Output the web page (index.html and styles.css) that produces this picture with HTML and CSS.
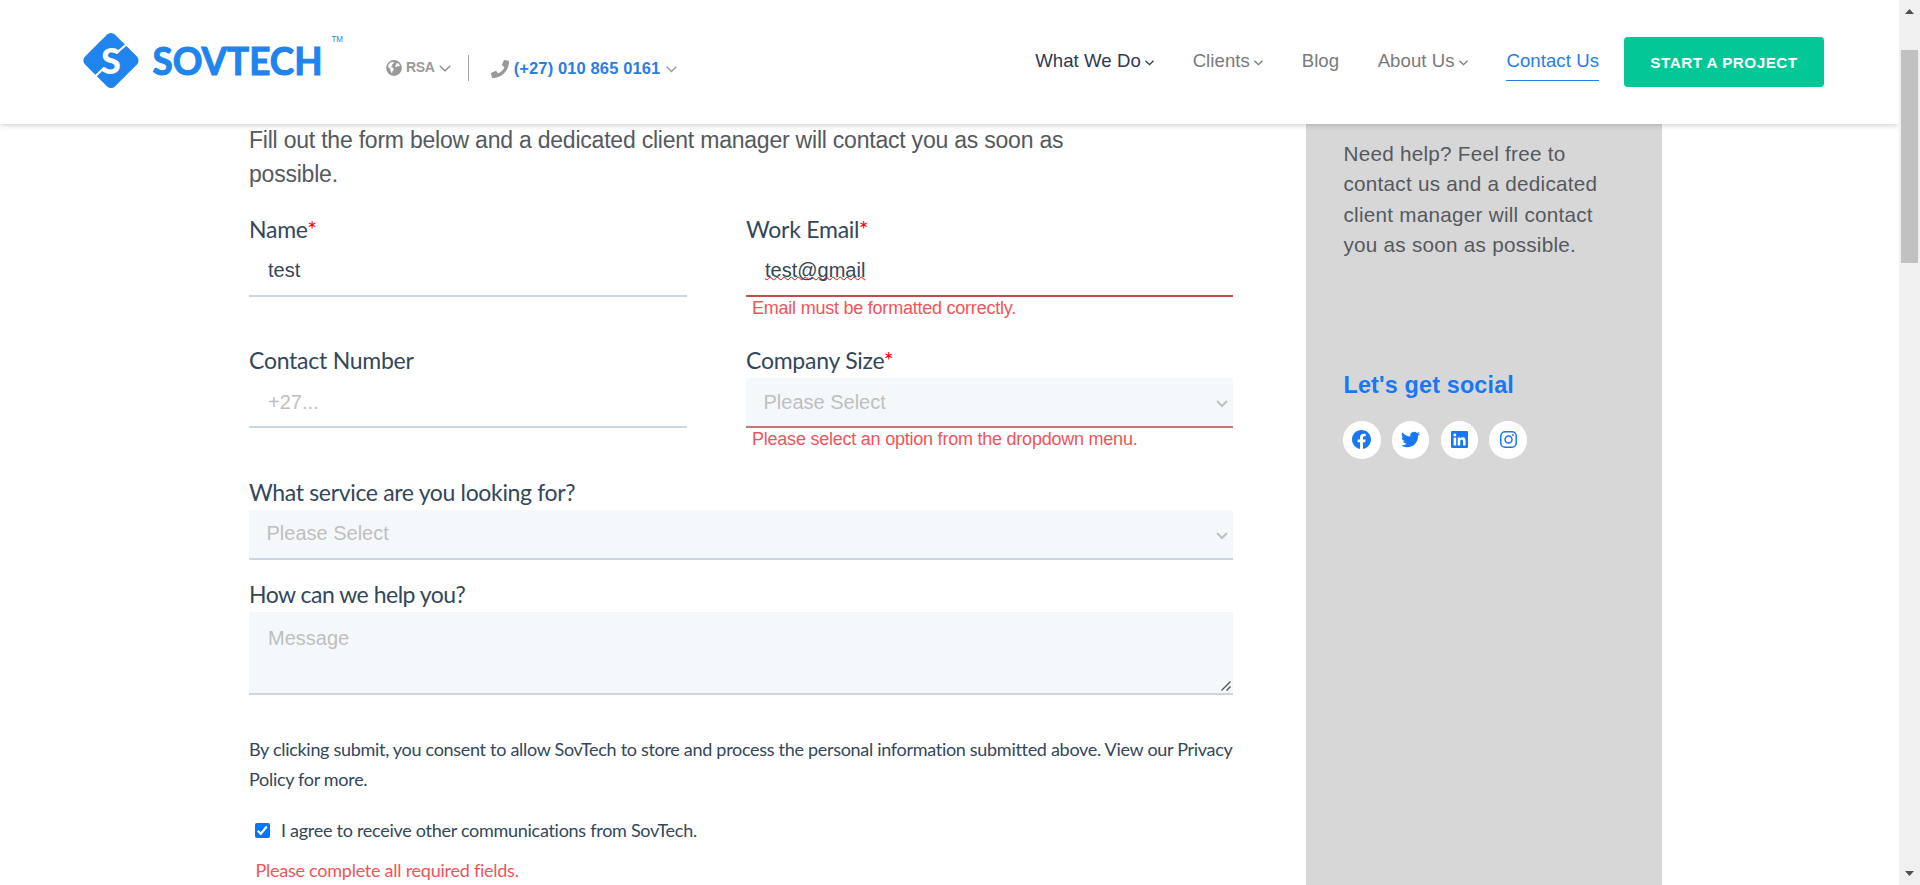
FILE: index.html
```html
<!DOCTYPE html>
<html lang="en">
<head>
<meta charset="utf-8">
<title>Contact Us | SovTech</title>
<link rel="stylesheet" href="styles.css">
</head>
<body>
<div class="page">
  <header class="header">
    <svg class="logo" width="264" height="62" viewBox="80 30 264 62">
      <rect x="89.900" y="39.400" width="42.200" height="42.200" rx="5.500" fill="#1f84ee" transform="rotate(45 111 60.500)"/>
      <path d="M117 52.500L127.500 43.500M104.500 67.500L95 76.500" stroke="#fff" stroke-width="2.200" fill="none"/>
      <text class="logo-s" x="111" y="73.900" text-anchor="middle">S</text>
      <text class="logo-word" x="152.500" y="74.500" textLength="170" lengthAdjust="spacingAndGlyphs">SOVTECH</text>
      <text class="logo-tm" x="331.500" y="41.500" textLength="11.500" lengthAdjust="spacingAndGlyphs">TM</text>
    </svg>
    <div class="region">
      <svg width="16" height="16" viewBox="0 0 16 16"><circle cx="8" cy="8" r="7.900" fill="#999"/><path d="M2.500 4.500L5 2.200 8 2l-.5 1.500L6 4.500l.5 1.300L4.500 7l2.500.8 1 1.700-1.500 1.700L6 13.500 4.500 11 4.200 8.800 2.300 7zM10 3.200l2.500.3 1.500 2.300-1 .7-1.500-.5L10 7.500 9 6l1.300-1.200z" fill="#fff"/></svg>
      <span class="region-name">RSA</span>
      <svg width="12" height="7" viewBox="0 0 12 7"><path d="M.7.7L6 5.800 11.300.7" fill="none" stroke="#888" stroke-width="1.200"/></svg>
    </div>
    <div class="phone">
      <svg width="18" height="18" viewBox="0 0 512 512"><path fill="#999" d="M493.400 24.600l-104-24c-11.300-2.600-22.900 3.300-27.500 13.900l-48 112c-4.200 9.800-1.400 21.300 6.900 28l60.600 49.600c-36 76.700-98.900 140.500-177.200 177.200l-49.600-60.600c-6.800-8.300-18.200-11.100-28-6.900l-112 48C3.900 366.500-2 378.100.6 389.400l24 104C27.100 504.200 36.700 512 48 512c256.100 0 464-207.500 464-464 0-11.200-7.700-20.900-18.600-23.400z"/></svg>
      <span class="phone-number">(+27) 010 865 0161</span>
      <svg width="11" height="7" viewBox="0 0 11 7"><path d="M.7.7l4.800 4.700L10.300.7" fill="none" stroke="#999" stroke-width="1.400"/></svg>
    </div>
    <nav class="nav">
      <a class="nav-link nav-dark">What We Do<svg class="caret" width="9" height="6" viewBox="0 0 9 6"><path d="M.5.7l4 4 4-4" fill="none" stroke="currentColor" stroke-width="1.300"/></svg></a>
      <a class="nav-link">Clients<svg class="caret" width="9" height="6" viewBox="0 0 9 6"><path d="M.5.7l4 4 4-4" fill="none" stroke="currentColor" stroke-width="1.300"/></svg></a>
      <a class="nav-link">Blog</a>
      <a class="nav-link">About Us<svg class="caret" width="9" height="6" viewBox="0 0 9 6"><path d="M.5.7l4 4 4-4" fill="none" stroke="currentColor" stroke-width="1.300"/></svg></a>
      <a class="nav-link nav-active">Contact Us</a>
    </nav>
    <a class="cta">START A PROJECT</a>
  </header>
  <main class="main">
    <section class="form">
      <p class="lead">Fill out the form below and a dedicated client manager will contact you as soon as possible.</p>
      <div class="row">
        <div class="field">
          <label class="label">Name<span class="req">*</span></label>
          <div class="input">test</div>
        </div>
        <div class="field">
          <label class="label">Work Email<span class="req">*</span></label>
          <div class="input invalid"><span class="misspelled">test@gmail</span></div>
          <p class="error">Email must be formatted correctly.</p>
        </div>
      </div>
      <div class="row row-second">
        <div class="field">
          <label class="label">Contact Number</label>
          <div class="input placeholder phone-input">+27...</div>
        </div>
        <div class="field">
          <label class="label">Company Size<span class="req">*</span></label>
          <div class="input select placeholder invalid-soft"><span>Please Select</span><svg width="12" height="8" viewBox="0 0 12 8"><path d="M1 1l5 5 5-5" fill="none" stroke="#c0c0c0" stroke-width="2"/></svg></div>
          <p class="error">Please select an option from the dropdown menu.</p>
        </div>
      </div>
      <div class="field field-service">
        <label class="label label-tight">What service are you looking for?</label>
        <div class="input select placeholder"><span class="raised">Please Select</span><svg width="12" height="8" viewBox="0 0 12 8"><path d="M1 1l5 5 5-5" fill="none" stroke="#c0c0c0" stroke-width="2"/></svg></div>
      </div>
      <div class="field">
        <label class="label label-tighter">How can we help you?</label>
        <div class="textarea placeholder"><span>Message</span><svg width="10" height="10" viewBox="0 0 10 10"><path d="M.5 9.500l9-9M5.500 9.500l4-4" fill="none" stroke="#555" stroke-width="1.400"/></svg></div>
      </div>
      <p class="consent">By clicking submit, you consent to allow SovTech to store and process the personal information submitted above. View our Privacy Policy for more.</p>
      <div class="agree">
        <svg width="15" height="15" viewBox="0 0 15 15"><rect width="15" height="15" rx="2" fill="#0075ff"/><path d="M2.800 7.800l3 3 6-7.300" fill="none" stroke="#fff" stroke-width="2.200"/></svg>
        <span>I agree to receive other communications from SovTech.</span>
      </div>
      <p class="required-note">Please complete all required fields.</p>
    </section>
    <aside class="sidebar">
      <p class="help">Need help? Feel free to contact us and a dedicated client manager will contact you as soon as possible.</p>
      <h2 class="social-title">Let's get social</h2>
      <div class="social">
        <a class="social-link"><svg width="19" height="19" viewBox="0 0 24 24"><path fill="#1877f2" d="M24 12.073c0-6.627-5.373-12-12-12s-12 5.373-12 12c0 5.990 4.388 10.954 10.125 11.854v-8.385H7.078v-3.470h3.047V9.430c0-3.007 1.792-4.669 4.533-4.669 1.312 0 2.686.235 2.686.235v2.953H15.830c-1.491 0-1.956.925-1.956 1.874v2.250h3.328l-.532 3.470h-2.796v8.385C19.612 23.027 24 18.062 24 12.073z"/></svg></a>
        <a class="social-link"><svg width="19" height="19" viewBox="0 0 24 24"><path fill="#1877f2" d="M23.953 4.570a10 10 0 01-2.825.775 4.958 4.958 0 002.163-2.723c-.951.555-2.005.959-3.127 1.184a4.920 4.920 0 00-8.384 4.482C7.690 8.095 4.067 6.130 1.640 3.162a4.822 4.822 0 00-.666 2.475c0 1.710.870 3.213 2.188 4.096a4.904 4.904 0 01-2.228-.616v.060a4.923 4.923 0 003.946 4.827 4.996 4.996 0 01-2.212.085 4.936 4.936 0 004.604 3.417 9.867 9.867 0 01-6.102 2.105c-.390 0-.779-.023-1.170-.067a13.995 13.995 0 007.557 2.209c9.053 0 13.998-7.496 13.998-13.985 0-.210 0-.420-.015-.630A9.935 9.935 0 0024 4.590z"/></svg></a>
        <a class="social-link"><svg width="17" height="17" viewBox="0 0 448 448"><path fill="#1877f2" d="M416 0H31.900C14.300 0 0 14.500 0 32.300v383.400C0 433.500 14.300 448 31.900 448H416c17.600 0 32-14.500 32-32.300V32.300C448 14.500 433.600 0 416 0zM135.400 384H69V170.200h66.500V384zm-33.200-243c-21.300 0-38.500-17.300-38.500-38.500S80.900 64 102.200 64c21.200 0 38.500 17.300 38.500 38.500 0 21.300-17.200 38.500-38.500 38.500zm282.100 243h-66.400V280c0-24.800-.5-56.700-34.500-56.700-34.600 0-39.900 27-39.900 54.900V384h-66.400V170.200h63.700v29.200h.9c8.900-16.800 30.600-34.500 62.900-34.500 67.200 0 79.700 44.300 79.700 101.900V384z"/></svg></a>
        <a class="social-link"><svg width="17" height="17" viewBox="0 0 17 17" fill="none" stroke="#1877f2" stroke-width="1.500"><rect x=".8" y=".8" width="15.400" height="15.400" rx="4.300"/><circle cx="8.500" cy="8.500" r="3.500"/><circle cx="13" cy="4" r="1" fill="#1877f2" stroke="none"/></svg></a>
      </div>
    </aside>
  </main>
</div>
<div class="scrollbar">
  <svg width="9" height="5" viewBox="0 0 9 5"><path d="M0 5L4.500 0 9 5z" fill="#505050"/></svg>
  <div class="thumb"></div>
  <svg class="down" width="9" height="5" viewBox="0 0 9 5"><path d="M0 0h9L4.500 5z" fill="#505050"/></svg>
</div>
</body>
</html>
```
FILE: styles.css
```css
* { box-sizing: border-box; }
body { margin: 0; height: 885px; display: flex; overflow: hidden; background: #fff; font-family: "Liberation Sans", Arial, sans-serif; }
p, h2 { margin: 0; }
svg { display: block; flex: none; }

.page { width: 1899px; height: 885px; display: flex; flex-direction: column; overflow: hidden; }

.header { position: relative; z-index: 1; flex: none; height: 124px; padding: 30px 75px 0 80px; display: flex; align-items: flex-start; background: #fff; box-shadow: 0 1px 6px rgba(0, 0, 0, .2); }
.logo-s { font: 900 36px Lato, sans-serif; fill: #fff; }
.logo-word { font: 700 38px Lato, sans-serif; fill: #1f84ee; stroke: #1f84ee; stroke-width: 1.100; }
.logo-tm { font: 400 9.500px "Liberation Sans", sans-serif; fill: #1f84ee; }
.region { display: flex; align-items: center; height: 26px; margin: 25px 0 0 42px; padding-right: 17px; border-right: 1px solid #aaa; }
.region-name { margin: 0 4px 2px 4px; font-size: 14px; font-weight: 700; letter-spacing: -.3px; color: #999; }
.phone { display: flex; align-items: center; height: 26px; margin: 26px 0 0 22px; }
.phone-number { margin: 0 6px 1px 5px; font-size: 16.500px; font-weight: 700; letter-spacing: .12px; color: #2a7de9; white-space: nowrap; }
.nav { display: flex; gap: 38.500px; margin: 17px 0 0 auto; }
.nav-link { display: flex; align-items: center; height: 34px; padding-bottom: 5px; font-size: 18.600px; letter-spacing: .06px; color: #7a7a7a; white-space: nowrap; border-bottom: 1px solid transparent; }
.caret { margin: 4px 0 0 4.300px; }
.nav-dark { color: #2d3a50; }
.nav-active { color: #2a7de9; border-bottom-color: #2a7de9; }
.cta { flex: none; width: 200px; height: 50px; margin: 7px 0 0 25px; border-radius: 4px; background: #02c898; color: #fff; font-size: 15.300px; font-weight: 700; letter-spacing: .45px; line-height: 51px; text-align: center; }

.main { flex: 1; display: flex; padding-left: 249px; }
.form { width: 984px; flex: none; color: #33475b; }
.lead { width: 880px; margin-bottom: 24px; margin-top: -1px; font-size: 23px; line-height: 34px; letter-spacing: -.22px; color: #55595e; }
.row { display: grid; grid-template-columns: 438px 487px; gap: 59px; height: 131px; }
.row-second { height: 132px; }
.field-service { height: 102px; }
.label { display: block; height: 32px; font: 400 23px/28px Lato, sans-serif; letter-spacing: -.25px; }
.label-tight { letter-spacing: -.34px; }
.label-tighter { letter-spacing: -.5px; }
.req { margin-left: -.5px; color: #f00; font-weight: 400; }
.input { display: flex; align-items: center; justify-content: space-between; height: 50px; padding: 0 19px 1px; border-bottom: 2px solid #cbd6e2; font-size: 20px; }
.phone-input { padding-bottom: 0; }
.select { padding: 0 5px 0 17.500px; background: #f5f8fa; }
.select svg { margin-top: 3px; }
.raised { padding-bottom: 2px; }
.placeholder { color: #bfbfbf; }
.invalid { border-bottom-color: #c0504f; }
.invalid-soft { border-bottom-color: #c87872; }
.misspelled { text-decoration: underline wavy #f00 1px; text-decoration-skip-ink: none; text-underline-offset: -1px; }
.error { padding: 1px 0 0 6px; font-size: 18px; line-height: 21px; letter-spacing: -.23px; color: #f2545b; }
.textarea { display: flex; justify-content: space-between; height: 83px; padding: 15px 2px 2px 19px; border-bottom: 2px solid #cbd6e2; background: #f5f8fa; font-size: 20px; line-height: 23px; }
.textarea svg { align-self: flex-end; }
.consent { margin: 39px -5px 0 0; font: 400 18px/30px Lato, sans-serif; letter-spacing: -.3px; }
.agree { display: flex; align-items: center; gap: 11px; height: 30px; margin-top: 21px; padding-left: 6px; font: 400 18px/30px Lato, sans-serif; letter-spacing: -.28px; }
.required-note { margin-top: 10px; padding-left: 6.500px; font: 400 18px/30px Lato, sans-serif; letter-spacing: -.25px; color: #f2545b; }

.sidebar { width: 356px; margin-left: 73px; padding: 15px 37px 0; background: #d7d7d7; }
.help { width: 275px; padding-left: .5px; font-size: 20.700px; line-height: 30.400px; letter-spacing: .25px; color: #55595e; }
.social-title { margin-top: 110px; padding-left: .5px; font-size: 23.400px; line-height: 28px; letter-spacing: .15px; color: #1877f2; }
.social { display: flex; gap: 11.200px; margin-top: 22.500px; }
.social-link { display: flex; align-items: center; justify-content: center; width: 37.600px; height: 37.600px; border-radius: 50%; background: #fff; }

.scrollbar { width: 21px; height: 885px; flex: none; display: flex; flex-direction: column; padding: 9px 0 9px 2px; background: #f0f0f0; }
.scrollbar svg { margin-left: 4px; }
.thumb { width: 17px; height: 213px; margin-top: 36px; background: #c1c1c1; }
.down { margin-top: auto; }
```
